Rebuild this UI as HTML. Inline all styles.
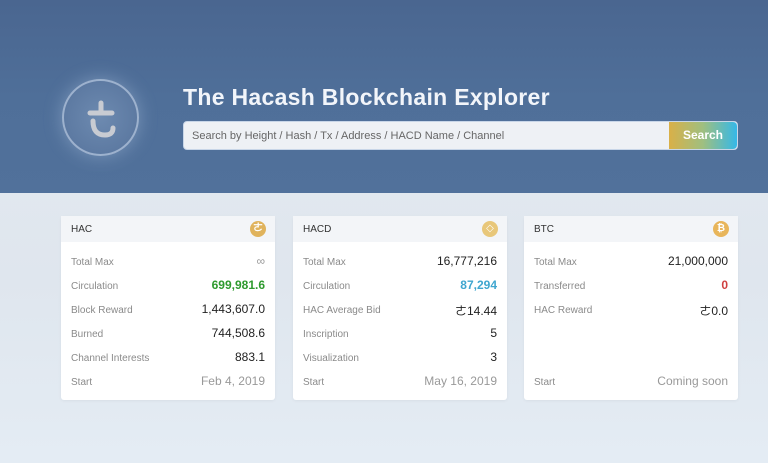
<!DOCTYPE html>
<html><head><meta charset="utf-8"><style>
*{margin:0;padding:0;box-sizing:border-box}
body{width:768px;height:463px;overflow:hidden;font-family:"Liberation Sans","DejaVu Sans",sans-serif;background:linear-gradient(#e6ebf1,#dfe6ee 60%,#e4ecf4);position:relative}
.hdr{position:absolute;left:0;top:0;width:768px;height:193px;background:linear-gradient(#4a6690,#4f6f99 50%,#51719b)}
.logo{position:absolute;left:62px;top:79px;width:77px;height:77px;border-radius:50%;border:2px solid rgba(200,215,235,.6);background:radial-gradient(#6d8ab0,#56739c);box-shadow:0 0 18px rgba(200,220,245,.35)}
h1{position:absolute;left:183px;top:84px;color:#f2f5fa;font-size:23px;font-weight:bold;letter-spacing:.3px}
.sb{position:absolute;left:183px;top:121px;width:555px;height:29px;background:#eef1f5;border-radius:4px;border:1px solid #c8d6e8}
.sb span{position:absolute;left:8px;top:8px;font-size:11px;color:#666}
.btn{position:absolute;right:0;top:0;width:68px;height:27px;border-radius:0 4px 4px 0;background:linear-gradient(90deg,#d9b048,#9fbf80 50%,#35b8e8);color:#fff;font-size:12px;font-weight:bold;text-align:center;line-height:27px}
.card{position:absolute;top:216px;width:214px;height:184px;background:#fff;border-radius:3px;box-shadow:0 1px 3px rgba(0,0,0,.05)}
.ch{height:26px;background:#f3f5f8;font-size:10px;color:#333;padding:8px 10px;position:relative}
.ic{position:absolute;right:9px;top:5px;width:16px;height:16px;border-radius:50%;background:#e0b35c;color:#fff;font-size:10px;text-align:center;line-height:16px;font-weight:bold}
.r{position:absolute;left:10px;right:10px;font-size:10px;color:#8a8a8a}
.r b{position:absolute;right:0;top:-3px;font-weight:normal;font-size:12px;color:#222}
</style></head><body>
<div class="hdr"></div>
<div class="logo"><svg width="73" height="73" viewBox="0 0 73 73"><g stroke="#c8cbd2" stroke-width="5" fill="none" stroke-linecap="round"><path d="M26 32h22"/><path d="M37 22v10"/><path d="M29 40q0 14 12 14q8 0 8-7"/></g></svg></div>
<h1>The Hacash Blockchain Explorer</h1>
<div class="sb"><span>Search by Height / Hash / Tx / Address / HACD Name / Channel</span><div class="btn">Search</div></div>

<div class="card" style="left:61px"><div class="ch">HAC<div class="ic">ㄜ</div></div>
<div class="r" style="top:41px">Total Max<b style="color:#999">∞</b></div>
<div class="r" style="top:65px">Circulation<b style="color:#2e9a2e;font-weight:bold">699,981.6</b></div>
<div class="r" style="top:89px">Block Reward<b>1,443,607.0</b></div>
<div class="r" style="top:113px">Burned<b>744,508.6</b></div>
<div class="r" style="top:137px">Channel Interests<b>883.1</b></div>
<div class="r" style="top:161px">Start<b style="color:#999">Feb 4, 2019</b></div></div>

<div class="card" style="left:293px"><div class="ch">HACD<div class="ic" style="background:#e8c77a">◇</div></div>
<div class="r" style="top:41px">Total Max<b>16,777,216</b></div>
<div class="r" style="top:65px">Circulation<b style="color:#3fa6cf;font-weight:bold">87,294</b></div>
<div class="r" style="top:89px">HAC Average Bid<b>ㄜ14.44</b></div>
<div class="r" style="top:113px">Inscription<b>5</b></div>
<div class="r" style="top:137px">Visualization<b>3</b></div>
<div class="r" style="top:161px">Start<b style="color:#999">May 16, 2019</b></div></div>

<div class="card" style="left:524px"><div class="ch">BTC<div class="ic" style="background:#e8b55a">₿</div></div>
<div class="r" style="top:41px">Total Max<b>21,000,000</b></div>
<div class="r" style="top:65px">Transferred<b style="color:#d04040;font-weight:bold">0</b></div>
<div class="r" style="top:89px">HAC Reward<b>ㄜ0.0</b></div>
<div class="r" style="top:161px">Start<b style="color:#999">Coming soon</b></div></div>
</body></html>
